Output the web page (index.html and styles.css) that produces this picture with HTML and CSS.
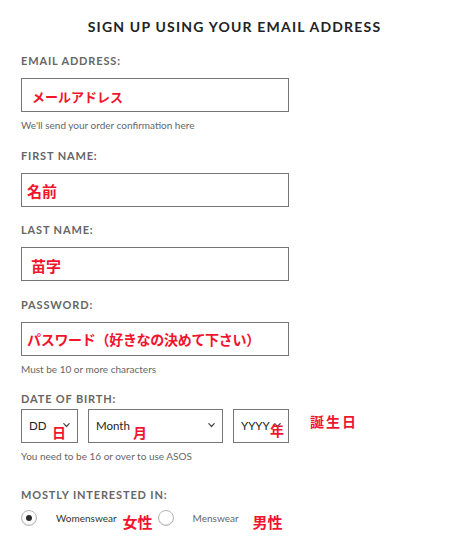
FILE: index.html
```html
<!DOCTYPE html>
<html lang="ja">
  <head>
    <meta charset="UTF-8" />
    <meta name="viewport" content="width=device-width, initial-scale=1.0" />
    <title>Sign up</title>
    <link rel="stylesheet" href="styles.css">
  </head>
  <body>
    <h1 class="title">SIGN UP USING YOUR EMAIL ADDRESS</h1>

    <form class="signup">
      <div class="field">
        <div class="label">EMAIL ADDRESS:</div>
        <div class="box"><span class="jp jp-email">メールアドレス</span></div>
        <div class="hint">We'll send your order confirmation here</div>
      </div>

      <div class="field">
        <div class="label">FIRST NAME:</div>
        <div class="box"><span class="jp jp-first">名前</span></div>
      </div>

      <div class="field">
        <div class="label">LAST NAME:</div>
        <div class="box"><span class="jp jp-last">苗字</span></div>
      </div>

      <div class="field">
        <div class="label">PASSWORD:</div>
        <div class="box"><span class="jp jp-pass">パスワード（好きなの決めて下さい）</span></div>
        <div class="hint">Must be 10 or more characters</div>
      </div>

      <div class="field field-dob">
        <div class="label label-dob">DATE OF BIRTH:</div>
        <div class="dob">
          <div class="select select-dd">
            <span class="select-text">DD</span>
            <svg class="chevron" width="7" height="5" viewBox="0 0 7 5"><path d="M0 0.6 L3.5 4.4 L7 0.6 L6 0 L3.5 2.6 L1 0 Z" fill="#444"/></svg>
            <span class="note note-dd">日</span>
          </div>
          <div class="select select-month">
            <span class="select-text">Month</span>
            <svg class="chevron" width="7" height="5" viewBox="0 0 7 5"><path d="M0 0.6 L3.5 4.4 L7 0.6 L6 0 L3.5 2.6 L1 0 Z" fill="#444"/></svg>
            <span class="note note-month">月</span>
          </div>
          <div class="select select-yyyy">
            <span class="select-text">YYYY</span>
            <svg class="chevron" width="7" height="5" viewBox="0 0 7 5"><path d="M0 0.6 L3.5 4.4 L7 0.6 L6 0 L3.5 2.6 L1 0 Z" fill="#444"/></svg>
            <span class="note note-yyyy">年</span>
          </div>
          <span class="jp birthday">誕生日</span>
        </div>
        <div class="hint">You need to be 16 or over to use ASOS</div>
      </div>

      <div class="field">
        <div class="label">MOSTLY INTERESTED IN:</div>
        <div class="radios">
          <span class="radio checked"></span>
          <span class="radio-label dark">Womenswear</span>
          <span class="jp jp-radio">女性</span>
          <span class="radio"></span>
          <span class="radio-label">Menswear</span>
          <span class="jp jp-radio jp-men">男性</span>
        </div>
      </div>
    </form>
  </body>
</html>
```

FILE: styles.css
```css
body {
  margin: 0;
  background: #fff;
  font-family: Lato, "Liberation Sans", sans-serif;
  color: #2d2d2d;
}

.title {
  margin: 0;
  padding: 17px 0 0 6px;
  font-size: 14px;
  line-height: 20px;
  font-weight: 700;
  letter-spacing: 1.2px;
  text-align: center;
  color: #222;
}

.signup {
  margin-top: 17px;
  padding-left: 21px;
}

.field {
  margin-bottom: 16.5px;
}

.field-dob {
  margin-bottom: 25px;
}

.label {
  font-size: 11px;
  line-height: 14px;
  font-weight: 700;
  letter-spacing: 0.85px;
  color: #666;
  margin-bottom: 10px;
}

.label-dob {
  margin-bottom: 3px;
}

.box {
  box-sizing: border-box;
  width: 268px;
  height: 34px;
  border: 1px solid #767676;
  display: flex;
  align-items: center;
}

.jp {
  font-family: "Noto Sans CJK JP", sans-serif;
  font-weight: 700;
  color: #f0142d;
}

.jp-email {
  font-size: 13px;
  padding-left: 10px;
  padding-top: 3px;
}

.jp-first {
  font-size: 15px;
  padding-left: 5px;
  padding-top: 1px;
}

.jp-last {
  font-size: 15px;
  padding-left: 9px;
  padding-top: 2px;
}

.jp-pass {
  font-size: 14px;
  padding-left: 5px;
  letter-spacing: -0.3px;
}

.hint {
  margin-top: 6px;
  font-size: 10px;
  line-height: 14px;
  color: #666;
}

.dob {
  display: flex;
  align-items: flex-start;
  gap: 10px;
}

.select {
  position: relative;
  box-sizing: border-box;
  height: 34px;
  border: 1px solid #767676;
  display: flex;
  align-items: center;
  justify-content: space-between;
  padding: 0 7px 2px 7px;
}

.select-dd {
  width: 57px;
}

.select-month {
  width: 135px;
}

.select-yyyy {
  width: 56px;
}

.select-text {
  font-size: 11.5px;
  color: #222;
}

.note {
  position: absolute;
  font-family: "Noto Sans CJK JP", sans-serif;
  font-weight: 700;
  font-size: 14px;
  line-height: 14px;
  color: #f0142d;
}

.note-dd {
  left: 30px;
  top: 15px;
}

.note-month {
  left: 44px;
  top: 15px;
}

.note-yyyy {
  left: 36px;
  top: 13px;
}

.birthday {
  margin-left: 11px;
  margin-top: 2px;
  font-size: 14px;
  letter-spacing: 2px;
}

.radios {
  display: flex;
  align-items: flex-start;
  margin-top: -2.5px;
}

.radio {
  box-sizing: border-box;
  width: 16px;
  height: 16px;
  border-radius: 50%;
  border: 1px solid #b5b5b5;
  box-shadow: inset 0 -1px 1px rgba(0, 0, 0, 0.12);
  display: flex;
  align-items: center;
  justify-content: center;
}

.radio.checked::after {
  content: "";
  width: 6px;
  height: 6px;
  border-radius: 50%;
  background: #2d2d2d;
}

.radio-label {
  margin-left: 19px;
  font-size: 10px;
  line-height: 16px;
  color: #666;
}

.radio-label.dark {
  color: #333;
}

.jp-radio {
  font-size: 15px;
  line-height: 16px;
  margin: 4px 5px 0 6px;
}

.jp-men {
  margin-left: 14px;
}
```
